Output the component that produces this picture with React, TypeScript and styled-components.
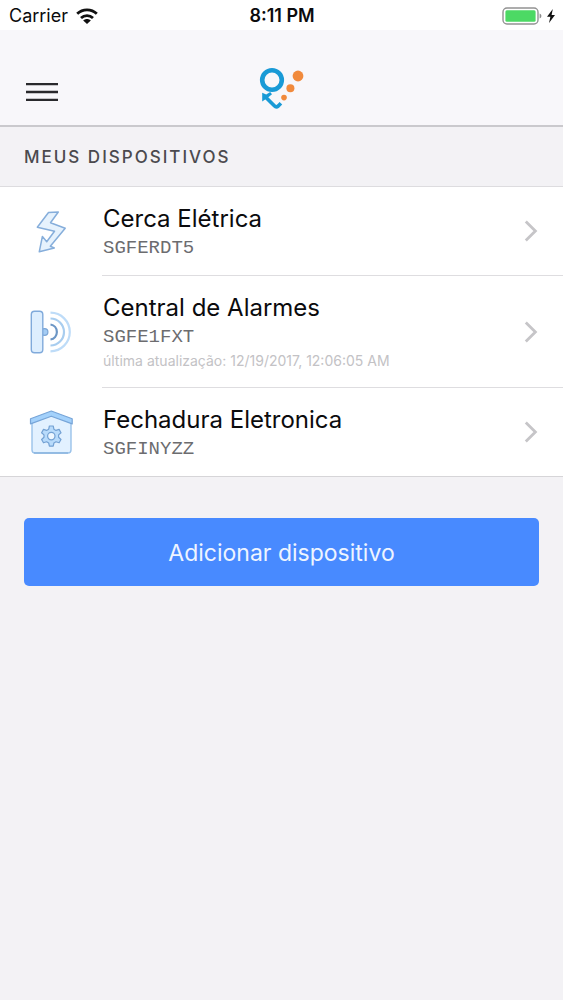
import React from "react";
import styled, { createGlobalStyle } from "styled-components";

const GlobalStyle = createGlobalStyle`
  *, *::before, *::after { box-sizing: border-box; }
  body {
    margin: 0;
    background: #f3f2f5;
    color: #0b0b0d;
    font-family: Inter, "Liberation Sans", sans-serif;
  }
`;

const Screen = styled.div`
  min-height: 100vh;
  display: flex;
  flex-direction: column;
`;

const StatusBar = styled.div`
  height: 30px;
  padding: 2px 8px 0 9px;
  display: grid;
  grid-template-columns: 1fr auto 1fr;
  align-items: center;
  background: #fff;
  font-size: 18px;
  line-height: 28px;
`;

const StatusGroup = styled.div<{ $end?: boolean }>`
  display: flex;
  align-items: center;
  justify-content: ${(p) => (p.$end ? "flex-end" : "flex-start")};
  gap: ${(p) => (p.$end ? "5px" : "8px")};
`;

const Clock = styled.span`
  font-weight: 600;
`;

const Header = styled.header`
  height: 97px;
  padding: 28px 24px 0;
  display: grid;
  grid-template-columns: 1fr auto 1fr;
  align-items: center;
  background: #f8f7fa;
  border-bottom: 2px solid #cac9cd;
`;

const MenuButton = styled.button`
  justify-self: start;
  display: flex;
  padding: 0;
  border: 0;
  background: none;
  cursor: pointer;
`;

const SectionTitle = styled.h2`
  margin: 0;
  padding: 1px 24px 0;
  font-size: 17px;
  font-weight: 500;
  line-height: 58px;
  letter-spacing: 2px;
  color: #4b4a4e;
`;

const DeviceList = styled.ul`
  margin: 0;
  padding: 0;
  list-style: none;
  background: #fff;
  border-top: 1px solid #dddcdf;
  border-bottom: 1px solid #d6d5d8;
`;

const DeviceLink = styled.a`
  display: flex;
  align-items: stretch;
  color: inherit;
  text-decoration: none;
`;

const IconCell = styled.span`
  flex: 0 0 102px;
  display: flex;
  align-items: center;
  padding-left: 28px;
`;

const DeviceBody = styled.span`
  flex: 1;
  min-width: 0;
  display: flex;
  align-items: center;
  justify-content: space-between;
  padding-right: 24px;

  li:not(:last-child) & {
    border-bottom: 1px solid #dedde0;
  }
`;

const DeviceText = styled.span`
  display: flex;
  flex-direction: column;
  padding: 17px 0 13px 1px;
`;

const DeviceName = styled.span`
  font-size: 24px;
  line-height: 30px;
`;

const DeviceCode = styled.span`
  font-family: "Liberation Mono", monospace;
  font-size: 19px;
  line-height: 28px;
  color: #6c6c6f;
`;

const DeviceNote = styled.span`
  padding-bottom: 3px;
  font-size: 14px;
  line-height: 20px;
  color: #c3c2c5;
`;

const Actions = styled.div`
  padding: 41px 24px;
`;

const AddButton = styled.button`
  display: block;
  width: 100%;
  padding: 2px 16px 0;
  border: 0;
  border-radius: 5px;
  background: #488aff;
  color: #eef4ff;
  font-family: inherit;
  font-size: 23px;
  line-height: 66px;
  cursor: pointer;
`;

const WifiIcon = () => (
  <svg width="22" height="17" viewBox="0 0 22 17" fill="none" stroke="#111" strokeWidth="2.8" aria-hidden="true">
    <path d="M1.2 5.8C6.6.5 15.4.5 20.8 5.8" />
    <path d="M5 10C8.4 6.7 13.6 6.7 17 10" />
    <path d="M11 16 7.2 12.4C9.3 10.4 12.7 10.4 14.8 12.4Z" fill="#111" stroke="none" />
  </svg>
);

const BatteryIcon = () => (
  <svg width="40" height="18" viewBox="0 0 40 18" aria-hidden="true">
    <rect x="1" y="1" width="35" height="16" rx="4" fill="#fff" stroke="#929292" strokeWidth="1.4" />
    <rect x="3.4" y="3.3" width="30.2" height="11.4" rx="1.5" fill="#4cd964" />
    <path d="M37.6 6.5c2.4.7 2.4 4.3 0 5Z" fill="#8c8c8c" />
  </svg>
);

const ChargingIcon = () => (
  <svg width="8" height="14" viewBox="0 0 8 14" aria-hidden="true">
    <path d="M5.8 0 0 7.8h3.4L2 14l6-8H4.6Z" fill="#111" />
  </svg>
);

const MenuIcon = () => (
  <svg width="36" height="22" viewBox="0 0 36 22" stroke="#29292c" strokeWidth="2.3" aria-hidden="true">
    <path d="M2 3.2h32M2 11h32M2 18.8h32" />
  </svg>
);

const Logo = () => (
  <svg width="48" height="52" viewBox="0 0 48 52" role="img" aria-label="Logo">
    <circle cx="14" cy="14" r="9.8" fill="none" stroke="#199ad6" strokeWidth="4.6" />
    <circle cx="40" cy="10" r="5.4" fill="#f18a3c" />
    <circle cx="32.4" cy="22.2" r="4" fill="#f18a3c" />
    <circle cx="26" cy="31.6" r="2.8" fill="#f18a3c" />
    <path d="m7 30.4 9.3 9.4q1.9 1.9 4 .2l2.6-2.8" fill="none" stroke="#199ad6" strokeWidth="3.6" />
    <path d="M4.2 26.8 8.2 28.6 12.2 26 14 28.2 9.4 32 4.2 35.6Z" fill="#199ad6" />
  </svg>
);

const FenceIcon = () => (
  <svg width="46" height="46" viewBox="0 0 46 46" aria-hidden="true">
    <path
      d="M20.5 3.5 30.3 3 22.5 13.7 37.2 19.2 22.3 37.2 26.3 39 11.3 42.7 14.4 27.4 18.7 32.8 26.5 22.2 9.3 18.2Z"
      fill="#e6f2fd"
      stroke="#86aedb"
      strokeWidth="1.5"
      strokeLinejoin="round"
    />
  </svg>
);

const AlarmIcon = () => (
  <svg width="46" height="46" viewBox="0 0 46 46" fill="none" aria-hidden="true">
    <circle cx="16.5" cy="23" r="3.4" fill="#a4ccf4" stroke="#7ba5d5" strokeWidth="1.2" />
    <rect x="3.3" y="2.2" width="11.5" height="41.6" rx="3.2" fill="#ddeefe" stroke="#80aadb" strokeWidth="1.4" />
    <path d="M22.5 15.5a7.6 7.6 0 0 1 0 15" stroke="#6c96c5" strokeWidth="2.2" />
    <path d="M22.5 9.5a13.5 13.5 0 0 1 0 27" stroke="#a8cdef" strokeWidth="2.2" />
    <path d="M22.5 3.7a19 19 0 0 1 0 38.6" stroke="#bedcf8" strokeWidth="2.2" />
  </svg>
);

const LockIcon = () => (
  <svg width="46" height="46" viewBox="0 0 46 46" strokeLinejoin="round" aria-hidden="true">
    <path d="M4 12v29q0 3 3 3h33q3 0 3-3V12L23.3 4Z" fill="#e2f1ff" stroke="#9ac2ea" strokeWidth="1.4" />
    <path d="M6 44h34" stroke="#79a8d8" strokeWidth="1.2" />
    <path d="M2.5 9.8 23.3 2l20.9 7.8v5.1L23.3 7.2 2.5 14.9Z" fill="#a3d1fb" stroke="#77a5d8" strokeWidth="1.2" />
    <g fill="#b8dbfb" stroke="#73a1d3" strokeWidth="1.2">
      <path d="M21.4 17h3.8l.7 3.2 2.1 1.2 3.1-1 1.9 3.3-2.4 2.2v2.4l2.4 2.2-1.9 3.3-3.1-1-2.1 1.2-.7 3.2h-3.8l-.7-3.2-2.1-1.2-3.1 1-1.9-3.3 2.4-2.2v-2.4l-2.4-2.2 1.9-3.3 3.1 1 2.1-1.2Z" />
      <circle cx="23.3" cy="27.1" r="3.7" fill="#eef7ff" />
    </g>
  </svg>
);

const ChevronIcon = () => (
  <svg width="16" height="24" viewBox="0 0 16 24" fill="none" stroke="#c6c5c8" strokeWidth="2.8" aria-hidden="true">
    <path d="m2.8 2.4 9.6 9.6-9.6 9.6" />
  </svg>
);

interface Device {
  name: string;
  code: string;
  note?: string;
  Icon: React.ComponentType;
}

const devices: Device[] = [
  { name: "Cerca Elétrica", code: "SGFERDT5", Icon: FenceIcon },
  {
    name: "Central de Alarmes",
    code: "SGFE1FXT",
    note: "última atualização: 12/19/2017, 12:06:05 AM",
    Icon: AlarmIcon,
  },
  { name: "Fechadura Eletronica", code: "SGFINYZZ", Icon: LockIcon },
];

export default function App() {
  return (
    <Screen>
      <GlobalStyle />
      <StatusBar>
        <StatusGroup>
          <span>Carrier</span>
          <WifiIcon />
        </StatusGroup>
        <Clock>8:11 PM</Clock>
        <StatusGroup $end>
          <BatteryIcon />
          <ChargingIcon />
        </StatusGroup>
      </StatusBar>
      <Header>
        <MenuButton type="button" aria-label="Menu">
          <MenuIcon />
        </MenuButton>
        <Logo />
      </Header>
      <main>
        <SectionTitle>MEUS DISPOSITIVOS</SectionTitle>
        <DeviceList>
          {devices.map(({ name, code, note, Icon }) => (
            <li key={code}>
              <DeviceLink href="#">
                <IconCell>
                  <Icon />
                </IconCell>
                <DeviceBody>
                  <DeviceText>
                    <DeviceName>{name}</DeviceName>
                    <DeviceCode>{code}</DeviceCode>
                    {note && <DeviceNote>{note}</DeviceNote>}
                  </DeviceText>
                  <ChevronIcon />
                </DeviceBody>
              </DeviceLink>
            </li>
          ))}
        </DeviceList>
        <Actions>
          <AddButton type="button">Adicionar dispositivo</AddButton>
        </Actions>
      </main>
    </Screen>
  );
}
